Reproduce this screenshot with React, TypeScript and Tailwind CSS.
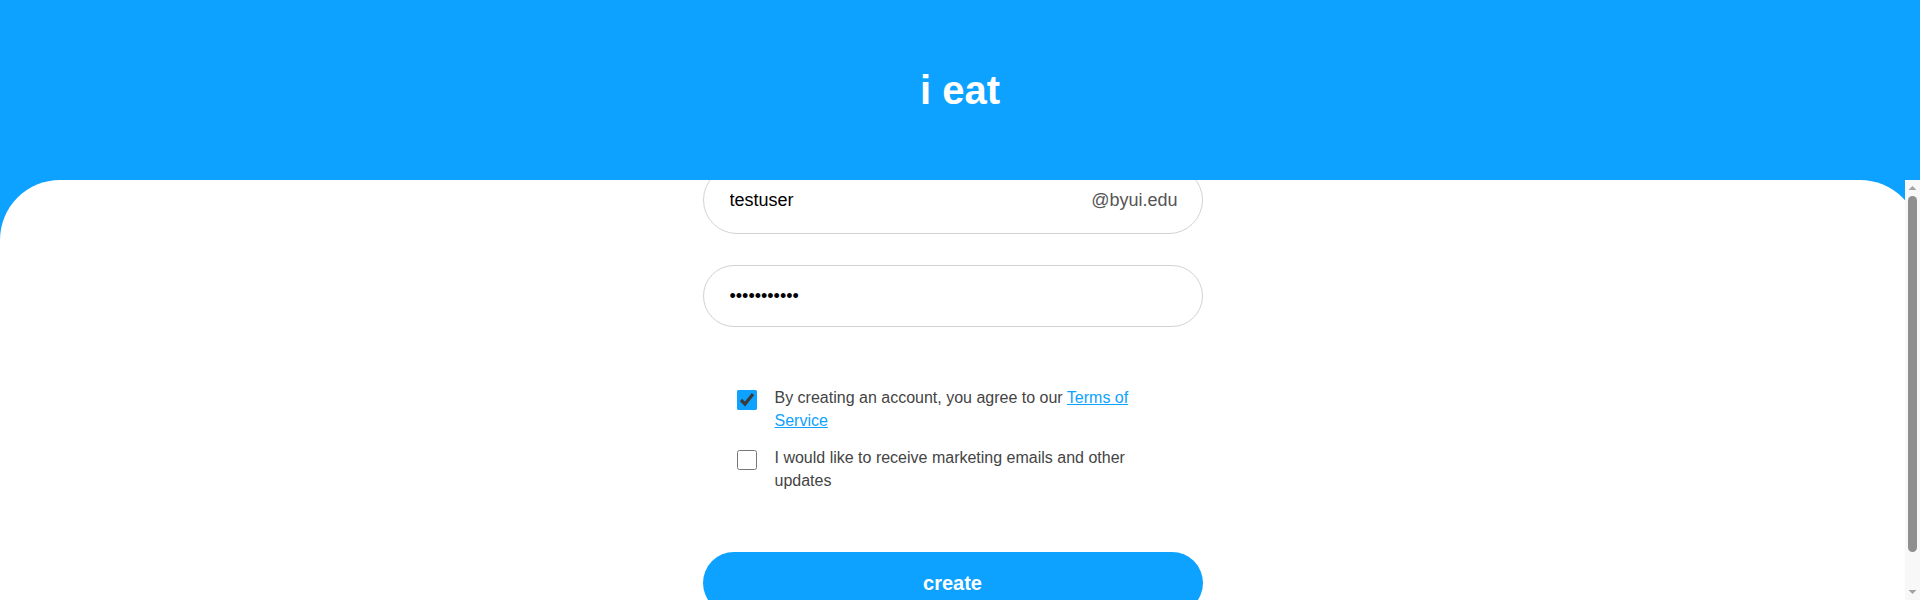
function Scrollbar() {
  return (
    <div className="absolute top-0 right-0 bottom-0 w-[15px] bg-[#f8f8f8] flex flex-col items-center">
      <svg width="9" height="15" viewBox="0 0 9 15" className="shrink-0">
        <path d="M0.5 10 L4.5 6 L8.5 10 Z" fill="#a3a3a3" />
      </svg>
      <div className="mt-px w-[9px] h-[356px] rounded-full bg-[#8f8f8f]" />
      <div className="flex-1" />
      <svg width="9" height="15" viewBox="0 0 9 15" className="shrink-0">
        <path d="M0.5 5 L4.5 9 L8.5 5 Z" fill="#a3a3a3" />
      </svg>
    </div>
  );
}

export default function App() {
  return (
    <div className="h-screen flex flex-col bg-[#0da2ff] font-['Liberation_Sans',Arial,sans-serif]">
      <header className="h-[180px] shrink-0 flex items-center justify-center">
        <h1 className="text-[40px] font-bold text-white">i eat</h1>
      </header>

      <div className="relative flex-1 min-h-0">
        <main className="h-full overflow-hidden bg-white rounded-t-[60px] flex flex-col justify-center pr-[15px]">
          <form className="w-[500px] mx-auto py-5 flex flex-col shrink-0">
            <div className="h-[68px] flex items-center border border-[#d2d2d2] rounded-full pl-[26px] pr-[24px]">
              <input
                type="text"
                defaultValue="testuser"
                className="flex-1 min-w-0 text-[18px] text-black outline-none bg-transparent"
              />
              <span className="text-[18px] text-[#555]">@byui.edu</span>
            </div>

            <input
              type="password"
              defaultValue="testuser123"
              className="mt-[31px] h-[62px] border border-[#d2d2d2] rounded-full px-[26px] text-[18px] text-black outline-none"
            />

            <div className="mt-[59px] px-[34px] flex flex-col gap-[14px] text-[16px] leading-[23px] text-[#444]">
              <label className="flex items-start gap-[18px]">
                <input type="checkbox" defaultChecked className="mt-1 w-5 h-5 shrink-0 accent-[#0da2ff]" />
                <span>
                  By creating an account, you agree to our{' '}
                  <a href="#" className="text-[#0da2ff] underline">
                    Terms of Service
                  </a>
                </span>
              </label>
              <label className="flex items-start gap-[18px]">
                <input type="checkbox" className="mt-1 w-5 h-5 shrink-0 accent-[#0da2ff]" />
                <span>I would like to receive marketing emails and other updates</span>
              </label>
            </div>

            <button
              type="button"
              className="mt-[60px] h-[62px] rounded-full bg-[#0da2ff] text-white text-[20px] font-bold"
            >
              create
            </button>
          </form>
        </main>
        <Scrollbar />
      </div>
    </div>
  );
}
